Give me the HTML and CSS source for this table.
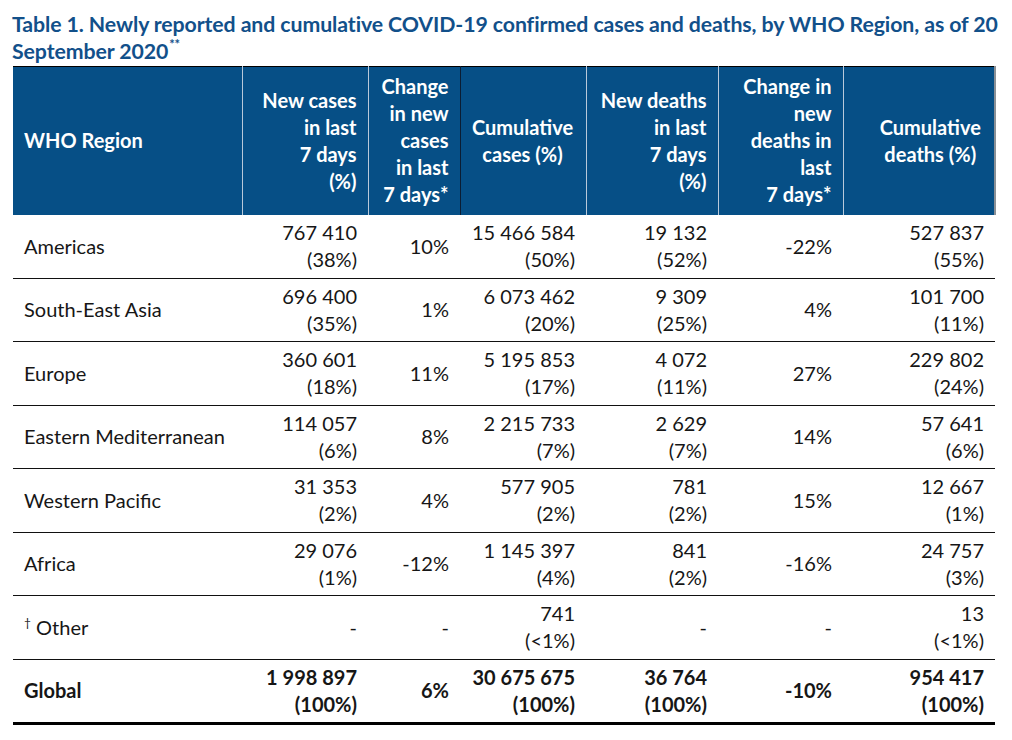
FILE: index.html
```html
<!DOCTYPE html>
<html lang="en">
<head>
<meta charset="utf-8">
<title>Table 1</title>
<link rel="stylesheet" href="styles.css">
</head>
<body>
<div class="page">
  <h1 class="title">Table 1. Newly reported and cumulative COVID-19 confirmed cases and deaths, by WHO Region, as of 20<br>September 2020<sup class="title-sup">**</sup></h1>
  <table class="who-table">
    <colgroup>
      <col class="c-region">
      <col class="c-new">
      <col class="c-change">
      <col class="c-cum">
      <col class="c-newd">
      <col class="c-changed">
      <col class="c-cumd">
    </colgroup>
    <thead>
      <tr>
        <th class="h-left">WHO Region</th>
        <th class="h-right">New cases<br>in last<br>7 days<br>(%)</th>
        <th class="h-right h-change">Change<br>in new<br>cases<br>in last<br>7 days*</th>
        <th class="h-center h-dark">Cumulative<br>cases (%)</th>
        <th class="h-right">New deaths<br>in last<br>7 days<br>(%)</th>
        <th class="h-right">Change in<br>new<br>deaths in<br>last<br>7 days*</th>
        <th class="h-center h-last">Cumulative<br>deaths (%)</th>
      </tr>
    </thead>
    <tbody>
      <tr>
        <td class="region">Americas</td>
        <td class="num">767 410<br>(38%)</td>
        <td class="num">10%</td>
        <td class="num">15 466 584<br>(50%)</td>
        <td class="num">19 132<br>(52%)</td>
        <td class="num">-22%</td>
        <td class="num">527 837<br>(55%)</td>
      </tr>
      <tr>
        <td class="region">South-East Asia</td>
        <td class="num">696 400<br>(35%)</td>
        <td class="num">1%</td>
        <td class="num">6 073 462<br>(20%)</td>
        <td class="num">9 309<br>(25%)</td>
        <td class="num">4%</td>
        <td class="num">101 700<br>(11%)</td>
      </tr>
      <tr>
        <td class="region">Europe</td>
        <td class="num">360 601<br>(18%)</td>
        <td class="num">11%</td>
        <td class="num">5 195 853<br>(17%)</td>
        <td class="num">4 072<br>(11%)</td>
        <td class="num">27%</td>
        <td class="num">229 802<br>(24%)</td>
      </tr>
      <tr>
        <td class="region">Eastern Mediterranean</td>
        <td class="num">114 057<br>(6%)</td>
        <td class="num">8%</td>
        <td class="num">2 215 733<br>(7%)</td>
        <td class="num">2 629<br>(7%)</td>
        <td class="num">14%</td>
        <td class="num">57 641<br>(6%)</td>
      </tr>
      <tr>
        <td class="region">Western Pacific</td>
        <td class="num">31 353<br>(2%)</td>
        <td class="num">4%</td>
        <td class="num">577 905<br>(2%)</td>
        <td class="num">781<br>(2%)</td>
        <td class="num">15%</td>
        <td class="num">12 667<br>(1%)</td>
      </tr>
      <tr>
        <td class="region">Africa</td>
        <td class="num">29 076<br>(1%)</td>
        <td class="num">-12%</td>
        <td class="num">1 145 397<br>(4%)</td>
        <td class="num">841<br>(2%)</td>
        <td class="num">-16%</td>
        <td class="num">24 757<br>(3%)</td>
      </tr>
      <tr>
        <td class="region"><sup class="dagger">†</sup> Other</td>
        <td class="num">-</td>
        <td class="num">-</td>
        <td class="num">741<br>(&lt;1%)</td>
        <td class="num">-</td>
        <td class="num">-</td>
        <td class="num">13<br>(&lt;1%)</td>
      </tr>
      <tr class="global">
        <td class="region">Global</td>
        <td class="num">1 998 897<br>(100%)</td>
        <td class="num">6%</td>
        <td class="num">30 675 675<br>(100%)</td>
        <td class="num">36 764<br>(100%)</td>
        <td class="num">-10%</td>
        <td class="num">954 417<br>(100%)</td>
      </tr>
    </tbody>
  </table>
</div>
</body>
</html>
```

FILE: styles.css
```css
html, body {
  margin: 0;
  padding: 0;
  background: #ffffff;
}

body {
  font-family: Lato, "Open Sans", "Liberation Sans", sans-serif;
  color: #161616;
}

.page {
  padding: 11px 0 0 12px;
  width: 990px;
}

.title {
  margin: 0 0 1px 0;
  font-size: 21.3px;
  line-height: 27px;
  font-weight: 700;
  color: #12508a;
  white-space: nowrap;
  letter-spacing: -0.1px;
}

.title-sup {
  font-size: 13px;
  line-height: 0;
  vertical-align: 10px;
  margin-left: 1px;
}

.who-table {
  margin-left: 1px;
  border-collapse: collapse;
  table-layout: fixed;
  width: 982px;
  font-size: 20px;
  line-height: 27px;
}

.c-region { width: 229px; }
.c-new { width: 126px; }
.c-change { width: 92px; }
.c-cum { width: 126px; }
.c-newd { width: 132px; }
.c-changed { width: 125px; }
.c-cumd { width: 152px; }

.who-table thead tr {
  height: 148px;
  border-top: 1px solid #000000;
}

.who-table th {
  background: #064f86;
  color: #ffffff;
  font-weight: 700;
  padding: 0 11px 0 11px;
  vertical-align: middle;
  border-right: 1px solid #b9c9da;
}

.who-table th.h-left {
  text-align: left;
}

.who-table th.h-right {
  text-align: right;
}

.who-table th.h-center {
  text-align: center;
  padding-right: 12px;
}

.who-table th.h-change {
  border-right: 1px solid #0b1d33;
}

.who-table th.h-last {
  border-right: 2px solid #8a9096;
  padding-left: 23px;
  padding-right: 0;
}

.who-table th:first-child {
  padding-left: 11px;
}

.who-table tbody tr {
  height: 63.5px;
  border-top: 1px solid #111111;
}

.who-table tbody tr:first-child {
  border-top: none;
}

.who-table tbody tr.global {
  height: 64px;
  border-bottom: 3px solid #000000;
  font-weight: 700;
}

.who-table td {
  padding: 0 11px;
  vertical-align: middle;
}

.who-table td.region {
  text-align: left;
}

.who-table td.num {
  text-align: right;
}

.dagger {
  font-size: 12px;
  line-height: 0;
  vertical-align: 8px;
}
```
